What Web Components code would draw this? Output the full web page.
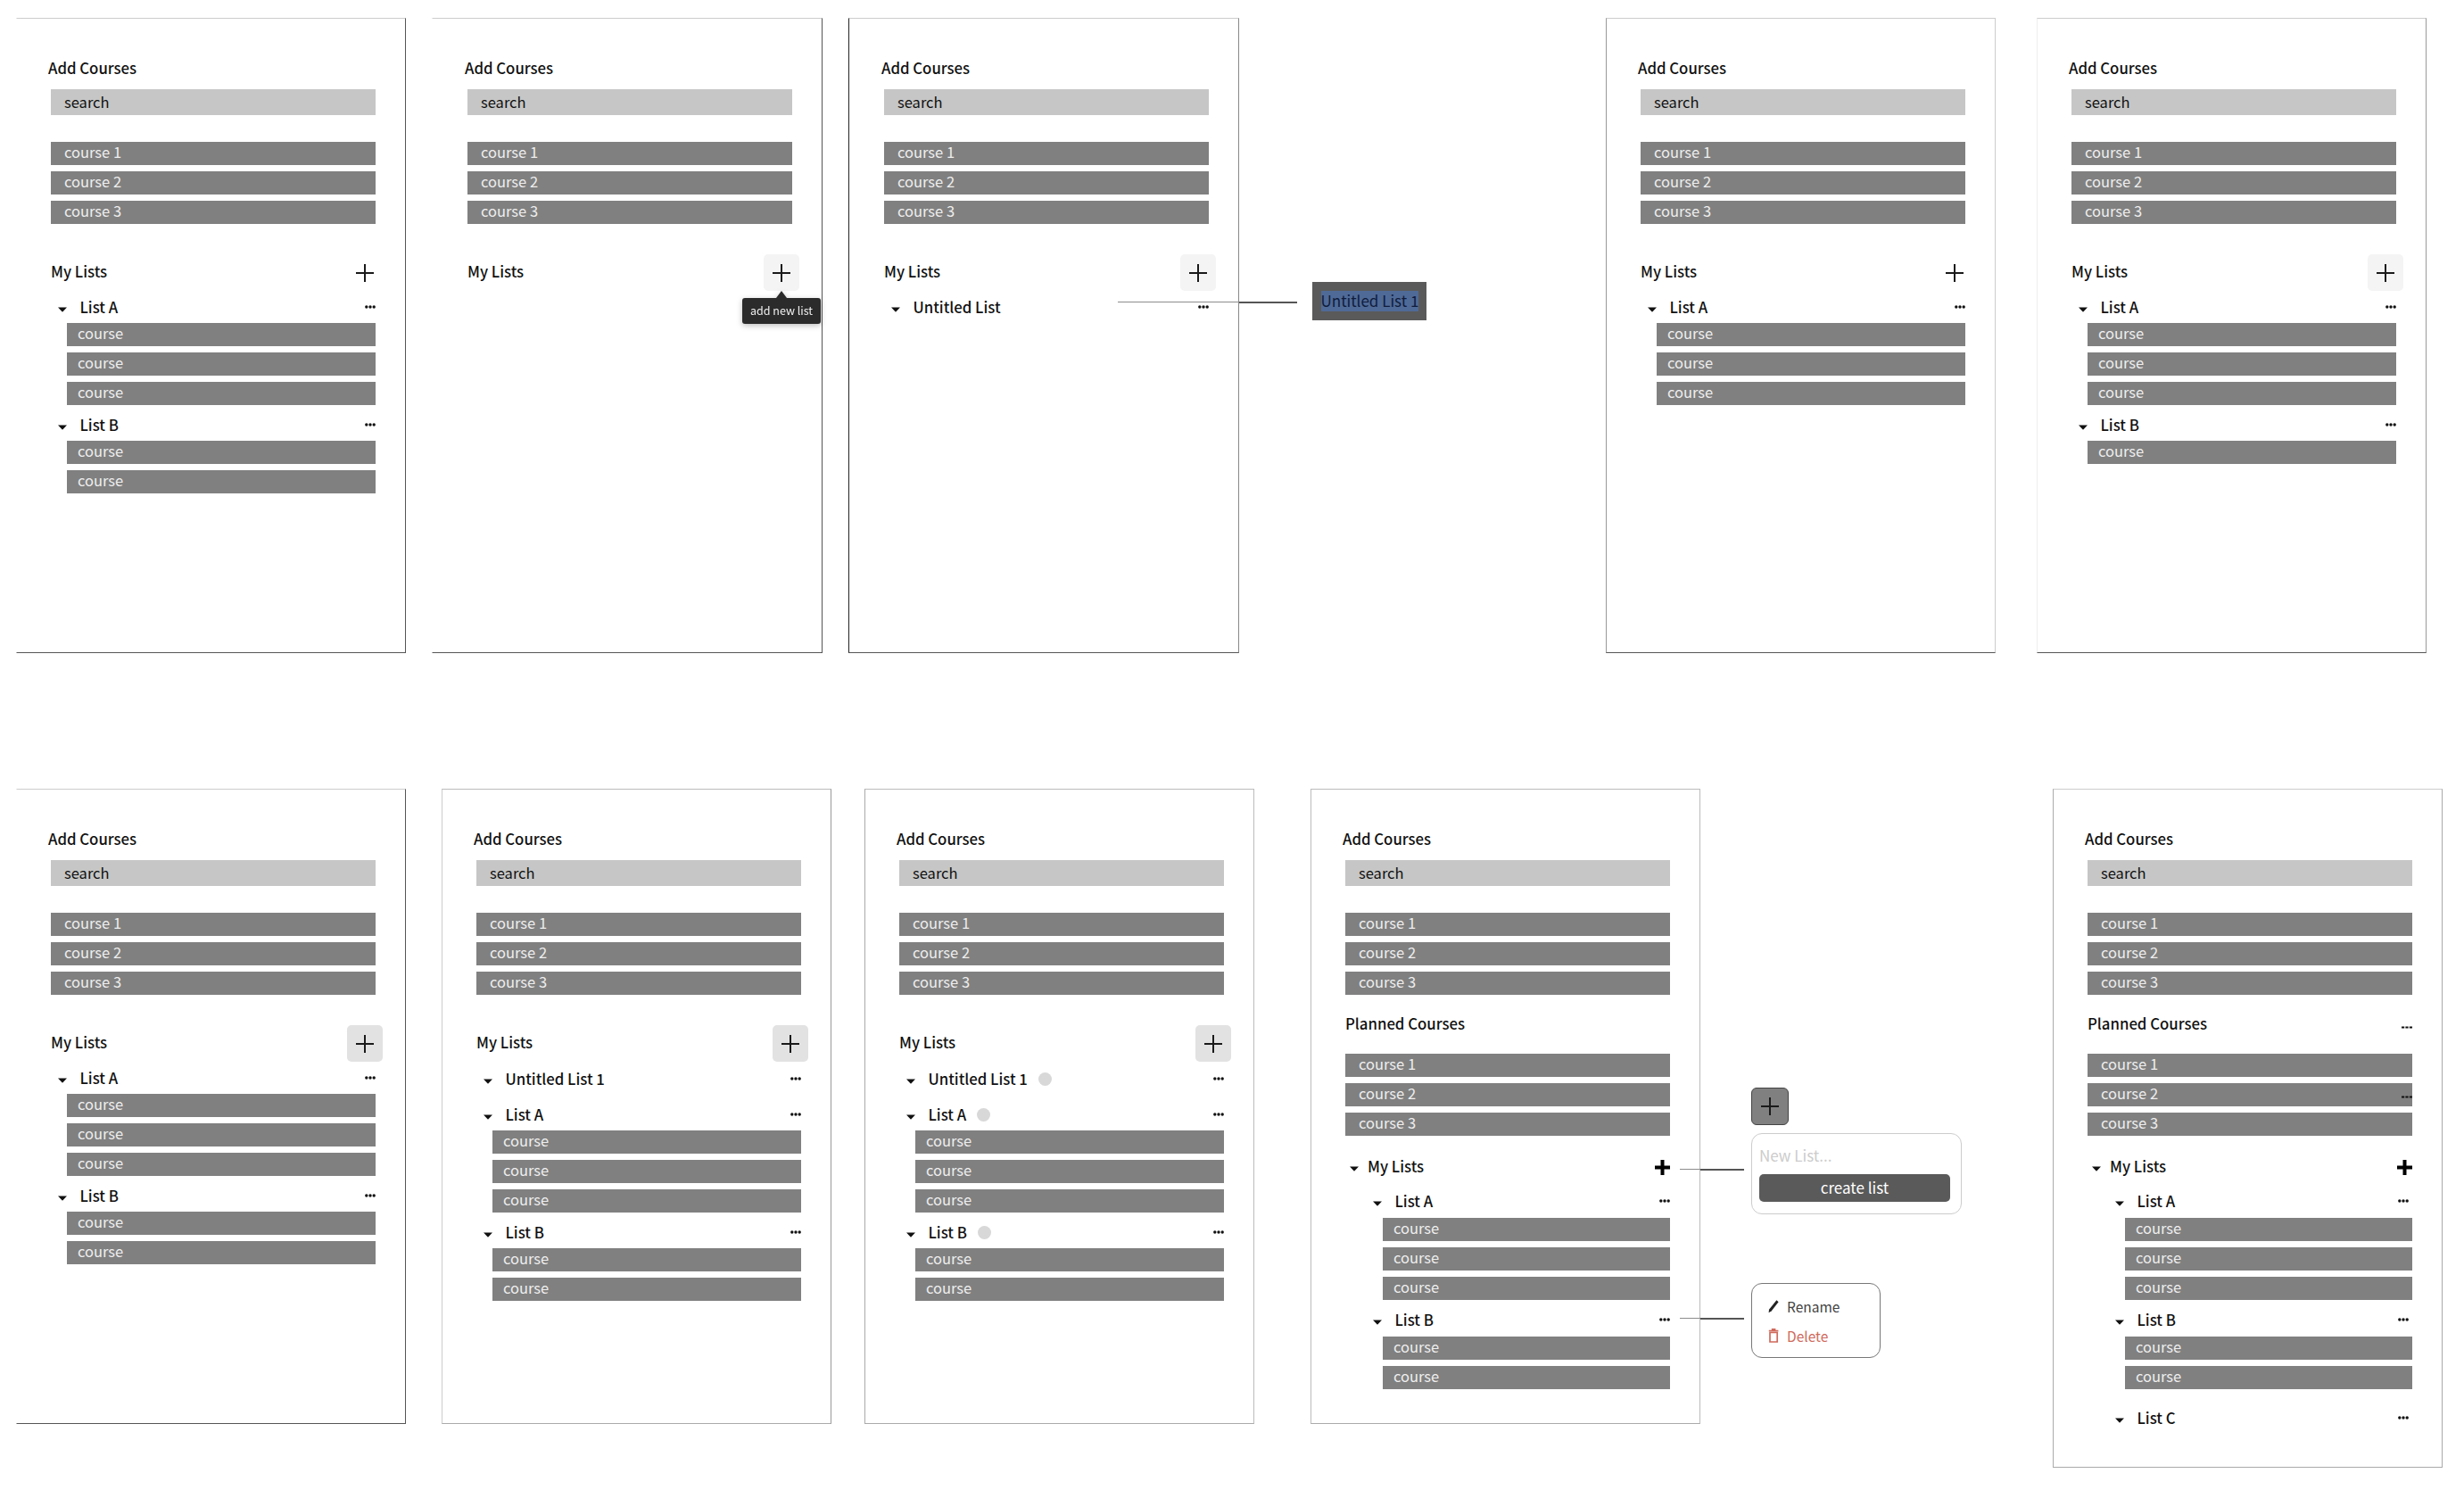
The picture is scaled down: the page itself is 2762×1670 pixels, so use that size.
<!DOCTYPE html>
<html>
<head>
<meta charset="utf-8">
<title>Course lists wireframes</title>
<style>
    html, body { margin: 0; background: #fff; }
    body { font-family: "Noto Sans CJK SC", "Noto Sans", sans-serif; color: #111; overflow: hidden; }
</style>
</head>
<body>
<wf-board>

    <!-- row one -->
    <wf-frame x="18" y="20" w="437" h="712" edges="#ccc #555 #555 transparent">
        <wf-add-courses></wf-add-courses>
        <wf-head label="My Lists"><wf-plus></wf-plus></wf-head>
        <wf-list name="List A" style="--top:7px"><wf-bar sub>course</wf-bar><wf-bar sub>course</wf-bar><wf-bar sub>course</wf-bar></wf-list>
        <wf-list name="List B"><wf-bar sub>course</wf-bar><wf-bar sub>course</wf-bar></wf-list>
    </wf-frame>

    <wf-frame x="484" y="20" w="438" h="712" edges="#ccc #555 #555 transparent" style="padding-left:39px">
        <wf-add-courses></wf-add-courses>
        <wf-head label="My Lists"><wf-plus tone="soft"></wf-plus></wf-head>
    </wf-frame>
    <wf-tooltip x="832" y="326" w="88" h="37">add new list</wf-tooltip>

    <wf-frame x="951" y="20" w="438" h="712" edges="#ccc #888 #555 #222" style="padding-left:39px">
        <wf-add-courses></wf-add-courses>
        <wf-head label="My Lists"><wf-plus tone="soft"></wf-plus></wf-head>
        <wf-list name="Untitled List" style="--top:7px"></wf-list>
    </wf-frame>
    <wf-connector x="1253" y="337" w="201" split="136"></wf-connector>
    <wf-rename-box x="1471" y="316" w="128" h="43">Untitled List 1</wf-rename-box>

    <wf-frame x="1800" y="20" w="437" h="712" edges="#ccc #ccc #555 #999">
        <wf-add-courses></wf-add-courses>
        <wf-head label="My Lists"><wf-plus></wf-plus></wf-head>
        <wf-list name="List A" style="--top:7px"><wf-bar sub>course</wf-bar><wf-bar sub>course</wf-bar><wf-bar sub>course</wf-bar></wf-list>
    </wf-frame>

    <wf-frame x="2283" y="20" w="437" h="712" edges="#ccc #999 #555 #eee">
        <wf-add-courses></wf-add-courses>
        <wf-head label="My Lists"><wf-plus tone="soft"></wf-plus></wf-head>
        <wf-list name="List A" style="--top:7px"><wf-bar sub>course</wf-bar><wf-bar sub>course</wf-bar><wf-bar sub>course</wf-bar></wf-list>
        <wf-list name="List B"><wf-bar sub>course</wf-bar></wf-list>
    </wf-frame>

    <!-- row two -->
    <wf-frame x="18" y="884" w="437" h="712" edges="#ccc #555 #555 transparent">
        <wf-add-courses></wf-add-courses>
        <wf-head label="My Lists"><wf-plus tone="press"></wf-plus></wf-head>
        <wf-list name="List A" style="--top:7px"><wf-bar sub>course</wf-bar><wf-bar sub>course</wf-bar><wf-bar sub>course</wf-bar></wf-list>
        <wf-list name="List B"><wf-bar sub>course</wf-bar><wf-bar sub>course</wf-bar></wf-list>
    </wf-frame>

    <wf-frame x="495" y="884" w="437" h="712" edges="#bbb #999 #aaa #ccc">
        <wf-add-courses></wf-add-courses>
        <wf-head label="My Lists"><wf-plus tone="press"></wf-plus></wf-head>
        <wf-list name="Untitled List 1" style="--top:8px"></wf-list>
        <wf-list name="List A" style="--top:16px"><wf-bar sub>course</wf-bar><wf-bar sub>course</wf-bar><wf-bar sub>course</wf-bar></wf-list>
        <wf-list name="List B"><wf-bar sub>course</wf-bar><wf-bar sub>course</wf-bar></wf-list>
    </wf-frame>

    <wf-frame x="969" y="884" w="437" h="712" edges="#bbb #bbb #aaa #aaa">
        <wf-add-courses></wf-add-courses>
        <wf-head label="My Lists"><wf-plus tone="press"></wf-plus></wf-head>
        <wf-list name="Untitled List 1" dot style="--top:8px"></wf-list>
        <wf-list name="List A" dot style="--top:16px"><wf-bar sub>course</wf-bar><wf-bar sub>course</wf-bar><wf-bar sub>course</wf-bar></wf-list>
        <wf-list name="List B" dot><wf-bar sub>course</wf-bar><wf-bar sub>course</wf-bar></wf-list>
    </wf-frame>

    <wf-frame x="1469" y="884" w="437" h="712" edges="#bbb #bbb #aaa #bbb">
        <wf-add-courses></wf-add-courses>
        <wf-head label="Planned Courses" planned></wf-head>
        <wf-bar>course 1</wf-bar><wf-bar>course 2</wf-bar><wf-bar>course 3</wf-bar>
        <wf-head label="My Lists" caret><wf-plus tone="bold"></wf-plus></wf-head>
        <wf-list name="List A" nested style="--top:15px"><wf-bar sub>course</wf-bar><wf-bar sub>course</wf-bar><wf-bar sub>course</wf-bar></wf-list>
        <wf-list name="List B" nested><wf-bar sub>course</wf-bar><wf-bar sub>course</wf-bar></wf-list>
    </wf-frame>
    <wf-connector x="1883" y="1309" w="72" split="23"></wf-connector>
    <wf-connector x="1883" y="1476" w="72" split="23"></wf-connector>
    <wf-plus-chip x="1963" y="1219" w="42" h="42"></wf-plus-chip>
    <wf-new-list x="1963" y="1270" w="236" h="91"></wf-new-list>
    <wf-list-menu x="1963" y="1438" w="145" h="84"></wf-list-menu>

    <wf-frame x="2301" y="884" w="437" h="761" edges="#ccc #aaa #aaa #aaa">
        <wf-add-courses></wf-add-courses>
        <wf-head label="Planned Courses" planned><wf-dashes></wf-dashes></wf-head>
        <wf-bar>course 1</wf-bar><wf-bar>course 2<wf-dashes slot="end"></wf-dashes></wf-bar><wf-bar>course 3</wf-bar>
        <wf-head label="My Lists" caret><wf-plus tone="bold"></wf-plus></wf-head>
        <wf-list name="List A" nested inset style="--top:15px"><wf-bar sub>course</wf-bar><wf-bar sub>course</wf-bar><wf-bar sub>course</wf-bar></wf-list>
        <wf-list name="List B" nested inset><wf-bar sub>course</wf-bar><wf-bar sub>course</wf-bar></wf-list>
        <wf-list name="List C" nested inset style="--top:21px"></wf-list>
    </wf-frame>

</wf-board>

<script>
'use strict';

const CARET = `<svg width="10" height="6" viewBox="0 0 10 6"><path d="M0 0.4H10L5 5.8Z" fill="#111"/></svg>`;
const DOTS = `<svg width="12" height="4" viewBox="0 0 12 4"><circle cx="1.8" cy="2" r="1.7"/><circle cx="6" cy="2" r="1.7"/><circle cx="10.2" cy="2" r="1.7"/></svg>`;

class Shadowed extends HTMLElement {

    constructor() {
        super();
        this._root = this.attachShadow({ mode: 'open' });
        this._root.innerHTML = `<style>${ this._css() }</style>${ this._html() }`;
    }

    _css() { return ''; }
    _html() { return '<slot></slot>'; }

    connectedCallback() {
        // items that sit on the free canvas carry their own coordinates
        for (let [attr, prop] of [['x', 'left'], ['y', 'top'], ['w', 'width'], ['h', 'height']]) {
            if (this.hasAttribute(attr))
                this.style[prop] = this.getAttribute(attr) + 'px';
        }
    }
}

class WfBoard extends Shadowed {
    _css() {
        return `:host { display: block; position: relative; width: 2762px; height: 1670px; background: #fff; }`;
    }
}

class WfFrame extends Shadowed {
    _css() {
        return `
            :host {
                display: block;
                position: absolute;
                box-sizing: border-box;
                border: 1px solid #ccc;
                padding: 43px 0 0 38px;
                background: #fff;
            }
            .content { width: 364px; }
        `;
    }
    _html() { return `<div class="content"><slot></slot></div>`; }
    connectedCallback() {
        super.connectedCallback();
        this.style.borderColor = this.getAttribute('edges');
    }
}

class WfBar extends Shadowed {
    _css() {
        return `
            :host {
                display: flex;
                align-items: center;
                justify-content: space-between;
                box-sizing: border-box;
                height: 26px;
                margin-bottom: 7px;
                padding: 0 0 5px 15px;
                background: #808080;
                color: #eee;
                font-size: 16.5px;
                line-height: 26px;
            }
            :host([sub]) { padding-left: 12px; }
            :host(:last-child) { margin-bottom: 0; }
            :host([search]) { height: 29.5px; padding-bottom: 1px; background: #c6c6c6; color: #111; }
            slot[name=end] { display: block; }
        `;
    }
    _html() { return `<span><slot></slot></span><slot name="end"></slot>`; }
}

class WfAddCourses extends Shadowed {
    _css() {
        return `
            :host { display: block; }
            .label { margin: 0 0 11.5px -3px; height: 24px; font-size: 16.75px; line-height: 24px; font-weight: 500; }
            wf-bar[search] { margin-bottom: 30px; }
        `;
    }
    _html() {
        return `
            <div class="label">Add Courses</div>
            <wf-bar search>search</wf-bar>
            <wf-bar>course 1</wf-bar>
            <wf-bar>course 2</wf-bar>
            <wf-bar>course 3</wf-bar>
        `;
    }
}

class WfHead extends Shadowed {
    _css() {
        return `
            :host {
                display: flex;
                align-items: center;
                justify-content: space-between;
                height: 41px;
                margin: 34px 0 0;
                font-size: 16.75px;
                line-height: 24px;
                font-weight: 500;
            }
            :host([planned]) { height: 24px; margin: 20px 0 22px; }
            :host([caret]) { height: 24px; margin: 23px 0 0; }
            .title { display: flex; align-items: center; padding: 0 0 4px 0; }
            :host([planned]) .title { padding-bottom: 1px; }
            :host([caret]) .title { padding: 0 0 2px 5px; }
            svg { display: none; margin-right: 10px; margin-top: 6px; }
            :host([caret]) svg { display: block; }
        `;
    }
    _html() {
        return `
            <div class="title">${ CARET }<span class="text"></span></div>
            <slot></slot>
        `;
    }
    connectedCallback() {
        super.connectedCallback();
        this._root.querySelector('.text').textContent = this.getAttribute('label');
    }
}

class WfPlus extends Shadowed {
    _css() {
        return `
            :host {
                display: flex;
                align-items: center;
                justify-content: center;
                width: 40px;
                height: 41px;
                margin-right: -8px;
                border-radius: 5px;
            }
            :host([tone=soft]) { background: #f4f4f4; }
            :host([tone=press]) { background: #e2e2e2; }
            :host([tone=bold]) { width: 17px; height: 17px; margin-right: 0; }
            svg { display: block; }
            .bold { display: none; }
            :host([tone=bold]) .thin { display: none; }
            :host([tone=bold]) .bold { display: block; }
        `;
    }
    _html() {
        return `
            <svg class="thin" width="20" height="20" viewBox="0 0 20 20"><path d="M10 0V20M0 10H20" stroke="#1a1a1a" stroke-width="2"/></svg>
            <svg class="bold" width="17" height="17" viewBox="0 0 17 17"><path d="M8.5 0V17M0 8.5H17" stroke="#000" stroke-width="4"/></svg>
        `;
    }
}

class WfDashes extends Shadowed {
    _css() {
        return `:host { display: block; margin-top: 9px; height: 3px; } svg { display: block; }`;
    }
    _html() {
        return `<svg width="12" height="3" viewBox="0 0 12 3"><path d="M0 0.5H3.2V2.5H0ZM4.4 0.5H7.6V2.5H4.4ZM8.8 0.5H12V2.5H8.8Z" fill="#111"/></svg>`;
    }
}

class WfList extends Shadowed {
    _css() {
        return `
            :host {
                display: block;
                margin-top: var(--top, 11px);
            }
            .row {
                display: flex;
                align-items: center;
                height: 24px;
                margin-bottom: 5px;
                padding-left: 8px;
                font-size: 16.75px;
                line-height: 24px;
                font-weight: 500;
            }
            :host([nested]) .row { margin-bottom: 6px; padding-left: 31px; }
            .caret { display: flex; margin: 3px 14.5px 0 0; }
            .name { padding-bottom: 2px; }
            .dot { display: none; width: 15px; height: 15px; margin: 0 0 2px 12px; border-radius: 50%; background: #d8d8d8; }
            :host([dot]) .dot { display: block; }
            .dots { display: flex; margin: 0 0 2px auto; fill: #111; }
            :host([inset]) .dots { margin-right: 4px; }
            .items { padding-left: 18px; }
            :host([nested]) .items { padding-left: 42px; }
        `;
    }
    _html() {
        return `
            <div class="row">
                <span class="caret">${ CARET }</span>
                <span class="name"></span>
                <span class="dot"></span>
                <span class="dots">${ DOTS }</span>
            </div>
            <div class="items"><slot></slot></div>
        `;
    }
    connectedCallback() {
        super.connectedCallback();
        this._root.querySelector('.name').textContent = this.getAttribute('name');
    }
}

class WfTooltip extends Shadowed {
    _css() {
        return `
            :host {
                display: block;
                position: absolute;
                filter: drop-shadow(0 2px 3px rgba(0, 0, 0, 0.25));
            }
            .arrow {
                width: 0;
                height: 0;
                margin: 0 auto;
                border: 6px solid transparent;
                border-top: 0;
                border-bottom: 8px solid #2b2b2b;
            }
            .body {
                height: 29px;
                border-radius: 3px;
                background: #2b2b2b;
                color: #eee;
                font-size: 12.5px;
                line-height: 28px;
                text-align: center;
            }
        `;
    }
    _html() { return `<div class="arrow"></div><div class="body"><slot></slot></div>`; }
}

class WfConnector extends Shadowed {
    _css() {
        return `
            :host { display: flex; align-items: center; position: absolute; height: 3px; }
            .near { height: 1px; background: #8c8c8c; }
            .far { flex: 1; height: 2px; background: #555; }
        `;
    }
    _html() { return `<div class="near"></div><div class="far"></div>`; }
    connectedCallback() {
        super.connectedCallback();
        this._root.querySelector('.near').style.width = this.getAttribute('split') + 'px';
    }
}

class WfRenameBox extends Shadowed {
    _css() {
        return `
            :host {
                display: flex;
                align-items: center;
                justify-content: center;
                position: absolute;
                background: #5a5a5a;
            }
            span {
                display: block;
                width: 109px;
                height: 23px;
                background: #4f6a97;
                color: #101c3c;
                font-size: 17px;
                line-height: 22px;
                text-align: center;
                white-space: nowrap;
            }
        `;
    }
    _html() { return `<span><slot></slot></span>`; }
}

class WfPlusChip extends Shadowed {
    _css() {
        return `
            :host {
                display: flex;
                align-items: center;
                justify-content: center;
                position: absolute;
                box-sizing: border-box;
                border: 1px solid #444;
                border-radius: 6px;
                background: #808080;
            }
        `;
    }
    _html() {
        return `<svg width="20" height="20" viewBox="0 0 20 20"><path d="M10 0V20M0 10H20" stroke="#1a1a1a" stroke-width="2"/></svg>`;
    }
}

class WfNewList extends Shadowed {
    _css() {
        return `
            :host {
                display: block;
                position: absolute;
                box-sizing: border-box;
                padding: 11px 12px 0 8px;
                border: 1px solid #ccc;
                border-radius: 12px;
                background: #fff;
            }
            .field { height: 28px; margin-bottom: 6px; color: #ccc; font-size: 17px; line-height: 26px; }
            .button {
                height: 31px;
                border-radius: 5px;
                background: #5a5a5a;
                color: #fff;
                font-size: 17px;
                line-height: 29px;
                text-align: center;
            }
        `;
    }
    _html() { return `<div class="field">New List...</div><div class="button">create list</div>`; }
}

class WfListMenu extends Shadowed {
    _css() {
        return `
            :host {
                display: block;
                position: absolute;
                box-sizing: border-box;
                padding: 13px 0 0 18px;
                border: 1px solid #777;
                border-radius: 12px;
                background: #fff;
                font-size: 15.5px;
                line-height: 22px;
            }
            .item { display: flex; align-items: center; height: 24px; margin-bottom: 9px; color: #444; }
            .item svg { display: block; width: 12px; height: 16px; margin-right: 9px; flex: none; }
            .delete { color: #cf6a5c; }
        `;
    }
    _html() {
        return `
            <div class="item">
                <svg viewBox="0 0 12 16"><path d="M9.4 1.2L11.6 3.2L3.6 13.6L0.6 15.2L1 11.8Z" fill="#222"/></svg>
                <span>Rename</span>
            </div>
            <div class="item delete">
                <svg viewBox="0 0 12 16"><path d="M2 4.5H10.2V15H2Z" fill="none" stroke="#cf6a5c" stroke-width="1.7"/><path d="M0.8 2.6H11.4M3.8 0.9H8.4" stroke="#cf6a5c" stroke-width="1.6"/></svg>
                <span>Delete</span>
            </div>
        `;
    }
}

customElements.define('wf-bar', WfBar);
customElements.define('wf-add-courses', WfAddCourses);
customElements.define('wf-plus', WfPlus);
customElements.define('wf-dashes', WfDashes);
customElements.define('wf-head', WfHead);
customElements.define('wf-list', WfList);
customElements.define('wf-frame', WfFrame);
customElements.define('wf-tooltip', WfTooltip);
customElements.define('wf-connector', WfConnector);
customElements.define('wf-rename-box', WfRenameBox);
customElements.define('wf-plus-chip', WfPlusChip);
customElements.define('wf-new-list', WfNewList);
customElements.define('wf-list-menu', WfListMenu);
customElements.define('wf-board', WfBoard);
</script>
</body>
</html>
